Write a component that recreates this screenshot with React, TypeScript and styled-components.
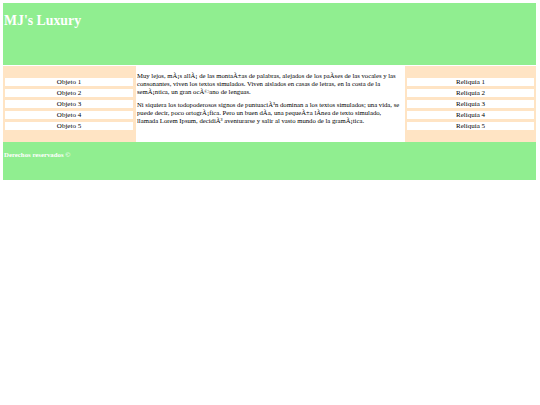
import React from "react";
import styled, { createGlobalStyle } from "styled-components";

const Global = createGlobalStyle`
  html, body { margin: 0; padding: 0; background: #ffffff; }
  body { padding: 3px 4px 3px 3px; font-family: "Liberation Serif", "Times New Roman", serif; }
`;

const Header = styled.header`
  background: #90ee90;
  height: 62px;
  padding: 0 1px;
  box-sizing: border-box;
`;

const Title = styled.h1`
  margin: 0;
  padding-top: 9.5px;
  font-size: 13.8px;
  line-height: 16px;
  color: #ffffff;
  font-weight: bold;
`;

const Main = styled.main`
  display: grid;
  grid-template-columns: 133px 1fr 131px;
  margin-top: 1px;
`;

const Aside = styled.aside<{ $right?: boolean }>`
  background: #ffe4c4;
  padding: 12px ${(p) => (p.$right ? "2px" : "3px")} 12px 2px;
  display: flex;
  flex-direction: column;
  gap: 3px;
`;

const Item = styled.div`
  background: #ffffff;
  height: 8px;
  font-size: 7px;
  line-height: 8px;
  text-align: center;
  color: #000;
`;

const Content = styled.section`
  padding: 1px 2px 0 1px;
  font-size: 6.7px;
  line-height: 8px;
  color: #000;
`;

const Para = styled.p`
  margin: 5px 0;
`;

const Footer = styled.footer`
  background: #90ee90;
  height: 38px;
  padding: 9px 1px 0;
  box-sizing: border-box;
  color: #ffffff;
  font-weight: bold;
  font-size: 6.8px;
  line-height: 8px;
`;

const objetos = ["Objeto 1", "Objeto 2", "Objeto 3", "Objeto 4", "Objeto 5"];
const reliquias = ["Reliquia 1", "Reliquia 2", "Reliquia 3", "Reliquia 4", "Reliquia 5"];

export default function App() {
  return (
    <>
      <Global />
      <Header>
        <Title>MJ's Luxury</Title>
      </Header>
      <Main>
        <Aside>
          {objetos.map((o) => (
            <Item key={o}>{o}</Item>
          ))}
        </Aside>
        <Content>
          <Para>
            Muy lejos, mÃ¡s allÃ¡ de las montaÃ±as de palabras, alejados de los paÃ{"\u00AD"}ses de las vocales y las consonantes, viven los textos simulados. Viven aislados en casas de letras, en la costa de la semÃ¡ntica, un gran ocÃ©ano de lenguas.
          </Para>
          <Para>
            Ni siquiera los todopoderosos signos de puntuaciÃ³n dominan a los textos simulados; una vida, se puede decir, poco ortogrÃ¡fica. Pero un buen dÃ{"\u00AD"}a, una pequeÃ±a lÃ{"\u00AD"}nea de texto simulado, llamada Lorem Ipsum, decidiÃ³ aventurarse y salir al vasto mundo de la gramÃ¡tica.
          </Para>
        </Content>
        <Aside $right>
          {reliquias.map((r) => (
            <Item key={r}>{r}</Item>
          ))}
        </Aside>
      </Main>
      <Footer>Derechos reservados ©</Footer>
    </>
  );
}
